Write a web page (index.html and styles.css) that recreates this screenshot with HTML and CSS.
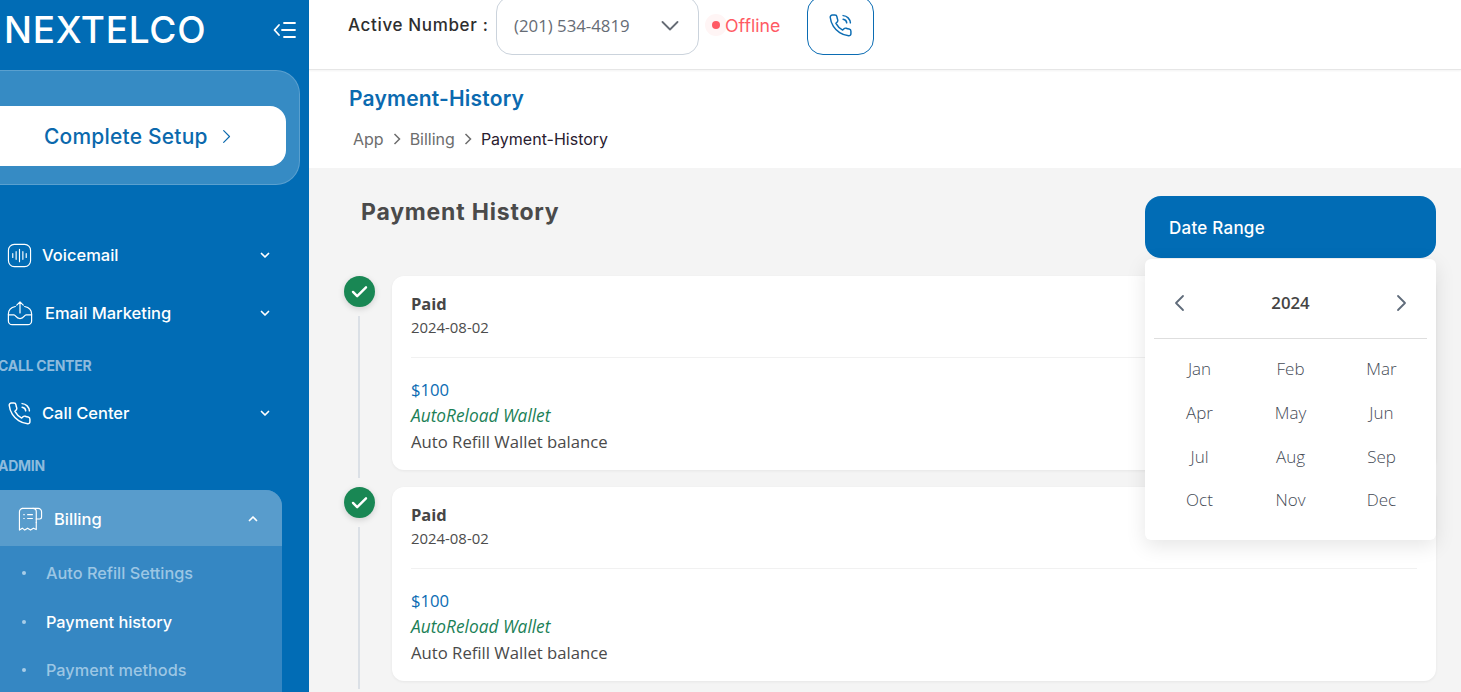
FILE: index.html
```html
<!DOCTYPE html>
<html lang="en">
<head>
<meta charset="utf-8">
<title>Payment History</title>
<link rel="stylesheet" href="styles.css">
</head>
<body>
<svg class="defs" width="0" height="0" aria-hidden="true">
  <defs>
    <symbol id="i-down" viewBox="0 0 12 12"><path d="M2.5 4.5 6 8l3.5-3.5" fill="none" stroke="currentColor" stroke-width="1.7" stroke-linecap="round" stroke-linejoin="round"/></symbol>
    <symbol id="i-phone" viewBox="0 0 24 24"><g fill="none" stroke="currentColor" stroke-width="1.4" stroke-linecap="round" stroke-linejoin="round"><path d="M22 17.4v2.5a2 2 0 0 1-2.18 2 19.79 19.79 0 0 1-8.63-3.07 19.5 19.5 0 0 1-6-6A19.79 19.79 0 0 1 2.12 4.1 2 2 0 0 1 4.11 2h2.5a2 2 0 0 1 2 1.72c.1.96.34 1.9.7 2.81a2 2 0 0 1-.45 2.11L7.6 9.9a16 16 0 0 0 6.5 6.5l1.27-1.27a2 2 0 0 1 2.11-.45c.9.36 1.85.6 2.81.7A2 2 0 0 1 22 17.4z"/><path d="M14.5 2.5a7.5 7.5 0 0 1 7 7"/><path d="M14.5 6a4 4 0 0 1 3.5 3.5"/></g></symbol>
  </defs>
</svg>
<div class="app">
  <aside class="sidebar">
    <div class="brand">
      <span class="logo">NEXTELCO</span>
      <svg class="collapse" viewBox="0 0 24 18" width="24" height="18"><g fill="none" stroke="#fff" stroke-width="1.8" stroke-linecap="round" stroke-linejoin="round"><path d="M6 4 1.5 9 6 14"/><path d="M11 2h11M9 9h13M11 16h11"/></g></svg>
    </div>
    <div class="setup">
      <a class="setup-btn"><span>Complete Setup</span>
        <svg viewBox="0 0 12 18" width="10" height="15"><path d="M2 2l7 7-7 7" fill="none" stroke="currentColor" stroke-width="1.4" stroke-linecap="round" stroke-linejoin="round"/></svg>
      </a>
    </div>
    <nav class="nav">
      <div class="item tall">
        <svg class="ico" viewBox="0 0 26 26"><g fill="none" stroke="#fff" stroke-width="1.2" stroke-linecap="round"><rect x="1.5" y="1.5" width="23" height="23" rx="6"/><path d="M6 11v4M9.5 9v8M13 6.5v13M16.5 9v8M20 11v4"/></g></svg>
        <span class="lbl">Voicemail</span>
        <svg class="caret" viewBox="0 0 12 12"><use href="#i-down"/></svg>
      </div>
      <div class="item tall">
        <svg class="ico wide" viewBox="0 0 28 28"><g fill="none" stroke="#fff" stroke-width="1.3" stroke-linecap="round" stroke-linejoin="round"><path d="M14 14V2M10.5 5.5 14 2l3.5 3.5"/><path d="M9 7C4.500 8 1.500 11 1.500 15v7.500a4 4 0 0 0 4 4h17a4 4 0 0 0 4-4V15c0-4-3-7-7.500-8"/><path d="M1.500 16h6c2 0 2 4 6.500 4s4.500-4 6.500-4h6"/></g></svg>
        <span class="lbl">Email Marketing</span>
        <svg class="caret" viewBox="0 0 12 12"><use href="#i-down"/></svg>
      </div>
      <div class="section">CALL CENTER</div>
      <div class="item short">
        <svg class="ico" viewBox="0 0 24 24"><use href="#i-phone"/></svg>
        <span class="lbl">Call Center</span>
        <svg class="caret" viewBox="0 0 12 12"><use href="#i-down"/></svg>
      </div>
      <div class="section">ADMIN</div>
      <div class="group">
        <div class="group-head">
          <svg class="ico-b" viewBox="0 0 26 26"><g fill="none" stroke="#fff" stroke-width="1.2" stroke-linecap="round" stroke-linejoin="round"><path d="M5 1.500h16a3.500 3.500 0 0 1 3.500 3.500v5.500a2 2 0 0 1-2 2H19"/><path d="M19 16V5a3.500 3.500 0 0 0-3.500-3.500"/><path d="M5 1.500A3.500 3.500 0 0 0 1.500 5v19l3-2 2.500 2 3-2 3 2 3-2 3 1.500V16"/><path d="M6 8h.5M10 8h5M6 12h.5M10 12h5"/></g></svg>
          <span class="lbl">Billing</span>
          <svg class="caret up" viewBox="0 0 12 12"><use href="#i-down"/></svg>
        </div>
        <ul class="sub">
          <li>Auto Refill Settings</li>
          <li class="on">Payment history</li>
          <li>Payment methods</li>
        </ul>
      </div>
    </nav>
  </aside>

  <div class="main">
    <header class="topbar">
      <span class="active-label">Active Number :</span>
      <div class="select"><span>(201) 534-4819</span>
        <svg viewBox="0 0 18 10" width="18" height="10"><path d="M1.500 1 9 8.500 16.500 1" fill="none" stroke="#666c75" stroke-width="1.800" stroke-linecap="round" stroke-linejoin="round"/></svg>
      </div>
      <div class="status"><span class="halo"><i class="dot"></i></span><span class="status-text">Offline</span></div>
      <button class="call"><svg viewBox="0 0 24 24" width="25" height="25"><use href="#i-phone"/></svg></button>
    </header>

    <section class="titlebar">
      <h1>Payment-History</h1>
      <div class="crumbs">
        <span>App</span>
        <svg viewBox="0 0 8 12" width="8" height="12"><path d="M1.500 1 6.500 6l-5 5" fill="none" stroke="#6d6d6d" stroke-width="1.500"/></svg>
        <span>Billing</span>
        <svg viewBox="0 0 8 12" width="8" height="12"><path d="M1.500 1 6.500 6l-5 5" fill="none" stroke="#6d6d6d" stroke-width="1.500"/></svg>
        <span class="cur">Payment-History</span>
      </div>
    </section>

    <section class="content">
      <div class="head">
        <h2>Payment History</h2>
        <div class="range">
          <button class="range-btn">Date Range</button>
          <div class="picker">
            <div class="picker-head">
              <svg viewBox="0 0 12 18" width="12" height="18"><path d="M10 2 3 9l7 7" fill="none" stroke="#5f6b7a" stroke-width="1.800" stroke-linecap="round" stroke-linejoin="round"/></svg>
              <strong>2024</strong>
              <svg viewBox="0 0 12 18" width="12" height="18"><path d="M2 2l7 7-7 7" fill="none" stroke="#5f6b7a" stroke-width="1.800" stroke-linecap="round" stroke-linejoin="round"/></svg>
            </div>
            <div class="months">
              <span>Jan</span><span>Feb</span><span>Mar</span>
              <span>Apr</span><span>May</span><span>Jun</span>
              <span>Jul</span><span>Aug</span><span>Sep</span>
              <span>Oct</span><span>Nov</span><span>Dec</span>
            </div>
          </div>
        </div>
      </div>

      <div class="row">
        <div class="rail">
          <span class="mark"><svg viewBox="0 0 18 14" width="17" height="13"><path d="M2 7.500 6.500 12 16 2.500" fill="none" stroke="#fff" stroke-width="2.600" stroke-linecap="round" stroke-linejoin="round"/></svg></span>
          <span class="line"></span>
        </div>
        <article class="card">
          <div class="card-top"><div class="paid">Paid</div><div class="date">2024-08-02</div></div>
          <div class="card-body">
            <div class="amt">$100</div>
            <div class="kind">AutoReload Wallet</div>
            <div class="desc">Auto Refill Wallet balance</div>
          </div>
        </article>
      </div>
      <div class="row">
        <div class="rail">
          <span class="mark"><svg viewBox="0 0 18 14" width="17" height="13"><path d="M2 7.500 6.500 12 16 2.500" fill="none" stroke="#fff" stroke-width="2.600" stroke-linecap="round" stroke-linejoin="round"/></svg></span>
          <span class="line"></span>
        </div>
        <article class="card">
          <div class="card-top"><div class="paid">Paid</div><div class="date">2024-08-02</div></div>
          <div class="card-body">
            <div class="amt">$100</div>
            <div class="kind">AutoReload Wallet</div>
            <div class="desc">Auto Refill Wallet balance</div>
          </div>
        </article>
      </div>
    </section>
  </div>
</div>
</body>
</html>
```

FILE: styles.css
```css
* { box-sizing: border-box; }
html, body { margin: 0; padding: 0; height: 100%; overflow: hidden; }
body { font-family: "Inter", "Liberation Sans", sans-serif; background: #f4f4f4; color: #444; }
.defs { position: absolute; }
.app { display: flex; width: 1461px; height: 692px; overflow: hidden; }

/* Sidebar */
.sidebar { flex: 0 0 309px; height: 692px; background: #016cb5; color: #fff; overflow: hidden; }
.brand { height: 60px; display: flex; align-items: center; justify-content: space-between; padding: 0 12px 0 4px; }
.logo { font-family: "Inter", sans-serif; font-weight: 500; font-size: 37px; line-height: 60px; letter-spacing: .7px; color: #fff; }
.collapse { display: block; }
.setup { margin: 10px 9px 0 -30px; height: 115px; padding: 35px 13px 0 0; background: rgba(255,255,255,.21); border: 1px solid rgba(255,255,255,.18); border-radius: 24px; }
.setup-btn { height: 60px; background: #fff; border-radius: 16px; color: #0b69ad; display: flex; align-items: center; padding-left: 73px; gap: 14px; font-size: 21px; font-weight: 500; letter-spacing: .2px; }
.nav { margin-top: 41px; font-size: 16px; }
.item { display: flex; align-items: center; padding: 0 38px 0 7px; }
.item.tall { height: 58px; }
.item.short { height: 46px; margin-bottom: 6px; }
.ico { width: 25px; height: 25px; flex: none; color: #fff; margin-right: 10px; }
.ico.wide { width: 26px; height: 26px; margin-right: 12px; }
.lbl { flex: 1; font-weight: 450; font-size: 16.500px; color: #fff; }
.caret { width: 12px; height: 12px; color: #fff; flex: none; }
.caret.up { transform: rotate(180deg); }
.section { height: 48px; line-height: 48px; margin-left: -2px; font-size: 14px; font-weight: 700; color: #8dbbdd; letter-spacing: -.25px; }
.group { margin-left: -20px; width: 302px; background: #3587c3; border-radius: 16px; }
.group-head { height: 56px; display: flex; align-items: center; padding: 2px 23px 0 38px; background: #589ccc; border-radius: 16px 16px 0 0; }
.ico-b { width: 25px; height: 25px; flex: none; margin-right: 11px; }
.sub { list-style: none; margin: 0; padding: 3px 0 30px 66px; }
.sub li { position: relative; height: 48.500px; line-height: 48.500px; color: #9cc6e4; font-size: 16.300px; font-weight: 450; }
.sub li.on { color: #fff; }
.sub li::before { content: ""; position: absolute; left: -24px; top: 22px; width: 4px; height: 4px; border-radius: 50%; background: #a8cde8; }

/* Main */
.main { flex: 1; min-width: 0; display: flex; flex-direction: column; }
.topbar { height: 70px; flex: none; display: flex; align-items: flex-start; background: #fff; border-bottom: 1px solid #e6e6e6; padding-left: 39px; box-shadow: 0 1px 2px rgba(0,0,0,.05); position: relative; overflow: hidden; }
.active-label { width: 148px; margin-top: 13px; line-height: 24px; font-size: 17px; font-weight: 450; letter-spacing: .65px; color: #2e2e2e; white-space: nowrap; }
.select { width: 203px; height: 59px; margin-top: -4px; display: flex; align-items: center; justify-content: space-between; padding: 0 19px 0 17px; border: 1px solid #cbd3dc; border-radius: 16px; font-family: "Open Sans", sans-serif; font-size: 16.800px; color: #666c75; }
.status { display: flex; align-items: center; margin: 14px 0 0 6px; width: 102px; }
.halo { width: 22px; height: 22px; border-radius: 50%; background: #fff5f5; display: flex; align-items: center; justify-content: center; }
.dot { width: 8px; height: 8px; border-radius: 50%; background: #ff5a64; }
.status-text { color: #ff5a64; font-size: 17.700px; margin-left: -2px; }
.call { width: 67px; height: 59px; margin-top: -4px; background: #fff; border: 1px solid #0b6cb3; border-radius: 16px; color: #0b6cb3; display: flex; align-items: center; justify-content: center; padding: 0; }
.titlebar { height: 98px; flex: none; background: #fff; padding: 16px 0 0 40px; }
h1 { margin: 0; font-size: 21px; line-height: 26px; font-weight: 600; letter-spacing: .2px; color: #0b6ab0; }
.crumbs { display: flex; align-items: center; gap: 9px; margin: 14px 0 0 4px; height: 26px; font-size: 16px; color: #6d6d6d; }
.crumbs .cur { color: #2a2030; }

.content { flex: 1; min-height: 0; padding: 28px 25px 0 35px; background: #f4f4f4; }
.head { display: flex; justify-content: space-between; align-items: flex-start; height: 80px; padding-left: 17px; }
h2 { margin: 0; font-size: 23px; line-height: 33px; font-weight: 700; letter-spacing: .8px; color: #4a4a4a; }
.range { position: relative; width: 291px; }
.range-btn { display: block; width: 100%; height: 62px; background: #016cb5; color: #fff; border: 0; border-radius: 16px; text-align: left; padding: 2px 24px 0; font: 500 17px "Inter", sans-serif; letter-spacing: .25px; }
.picker { position: absolute; z-index: 5; top: 63px; left: 0; width: 291px; height: 281px; background: #fff; border-radius: 6px; box-shadow: 0 6px 20px rgba(0,0,0,.1); padding: 0 9px; font-family: "Open Sans", sans-serif; }
.picker-head { height: 80px; display: flex; align-items: center; justify-content: space-between; padding: 8px 19px 0 19px; border-bottom: 1px solid #dedede; }
.picker-head strong { font-size: 16.800px; font-weight: 600; color: #444; }
.months { display: grid; grid-template-columns: repeat(3, 1fr); grid-auto-rows: 43.700px; padding-top: 8px; }
.months span { display: flex; align-items: center; justify-content: center; font-size: 17px; font-weight: 300; color: #454b56; }

.row { display: flex; gap: 17px; margin-bottom: 17px; }
.rail { flex: 0 0 31px; height: 194px; display: flex; flex-direction: column; align-items: center; }
.mark { width: 31px; height: 31px; flex: none; border-radius: 50%; background: #198754; display: flex; align-items: center; justify-content: center; box-shadow: 0 2px 6px rgba(0,0,0,.15); }
.line { width: 2px; height: 162px; flex: none; margin: 9px 1px 0 0; background: #dbe0e6; }
.card { flex: 1; height: 194px; background: #fff; border-radius: 12px; box-shadow: 0 1px 3px rgba(0,0,0,.06); padding: 0 19px; font-family: "Open Sans", sans-serif; }
.card-top { height: 82px; padding-top: 15px; border-bottom: 1px solid #f1f1f1; }
.paid { font-size: 16.500px; line-height: 26px; font-weight: 700; color: #464646; }
.date { font-size: 14.900px; line-height: 21px; color: #4c4c4c; }
.card-body { padding-top: 19px; font-size: 16.700px; line-height: 26px; }
.amt { color: #0b6cb3; }
.kind { color: #1b7f57; font-style: italic; font-size: 17.300px; }
.desc { color: #4a4a4a; }
```
